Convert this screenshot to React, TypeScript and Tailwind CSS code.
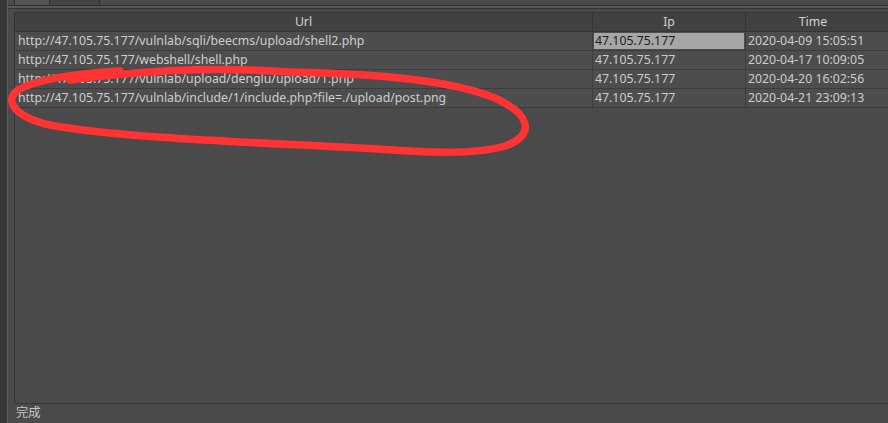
import React from "react";

const rows = [
  { url: "http://47.105.75.177/vulnlab/sqli/beecms/upload/shell2.php", ip: "47.105.75.177", time: "2020-04-09 15:05:51", sel: true },
  { url: "http://47.105.75.177/webshell/shell.php", ip: "47.105.75.177", time: "2020-04-17 10:09:05" },
  { url: "http://47.105.75.177/vulnlab/upload/denglu/upload/1.php", ip: "47.105.75.177", time: "2020-04-20 16:02:56" },
  { url: "http://47.105.75.177/vulnlab/include/1/include.php?file=./upload/post.png", ip: "47.105.75.177", time: "2020-04-21 23:09:13" },
];

export default function App() {
  return (
    <div
      className="relative w-[888px] h-[423px] overflow-hidden bg-[#4a4a4a] flex text-[12.3px] text-[#cdcdcd]"
      style={{ fontFamily: '"Noto Sans", "Noto Sans CJK SC", sans-serif' }}
    >
      <div className="w-[8px] h-full bg-[#383838] border-r border-[#5c5c5c]" />
      <div className="flex-1 flex flex-col">
        <div className="h-[12px] flex flex-col">
          <div className="h-[5px] flex">
            <div className="ml-[6px] w-[36px] h-[5px] bg-[#555555] border-x border-[#333333]" />
            <div className="w-[50px] h-[5px] bg-[#444444] border-r border-[#333333]" />
          </div>
          <div className="h-[1px] bg-[#2f2f2f]" />
          <div className="h-[2px] bg-[#575757]" />
          <div className="h-[1px] bg-[#333333]" />
          <div className="h-[3px] bg-[#4a4a4a]" />
        </div>
        <div className="flex-1 flex pl-[6px]">
          <div className="flex-1 flex flex-col">
            <div className="h-[392px] flex flex-col border-l border-t border-b border-[#353535] bg-[#4a4a4a]">
              <div className="h-[19px] flex bg-[#414141] border-b border-[#353535] text-[#d2d2d2]">
                <div className="w-[578px] flex items-center justify-center border-r border-[#353535]">Url</div>
                <div className="w-[153px] flex items-center justify-center border-r border-[#353535]">Ip</div>
                <div className="flex-1 flex items-center justify-center pr-[8px]">Time</div>
              </div>
              {rows.map((r, i) => (
                <div key={i} className="h-[19px] flex bg-[#4d4d4d] border-b border-[#3c3c3c]">
                  <div className="w-[578px] flex items-center pl-[3px] border-r border-[#3f3f3f] whitespace-nowrap">{r.url}</div>
                  <div className="w-[153px] flex items-center p-[1px] border-r border-[#3f3f3f]">
                    <div className={"h-full w-full flex items-center pl-[1px] " + (r.sel ? "bg-[#a6a6a6] text-[#1c1c1c]" : "")}>{r.ip}</div>
                  </div>
                  <div className="flex-1 flex items-center pl-[2px] whitespace-nowrap">{r.time}</div>
                </div>
              ))}
            </div>
            <div className="h-[19px] flex items-center pl-[2px] text-[#c6c6c6]">完成</div>
          </div>
        </div>
      </div>
      <svg className="absolute left-0 top-0 pointer-events-none" width="888" height="423" viewBox="0 0 888 423">
        <path
          d="M 70 80 C 130 72, 200 66, 290 72 C 380 74, 450 80, 495 98 C 528 113, 538 134, 505 146 C 470 156, 420 152, 360 148 C 250 142, 120 138, 50 125 C 18 118, 2 102, 18 90 C 35 80, 70 74, 120 71"
          fill="none"
          stroke="#ff3333"
          strokeWidth="7.5"
          strokeLinecap="round"
          strokeLinejoin="round"
        />
      </svg>
    </div>
  );
}
